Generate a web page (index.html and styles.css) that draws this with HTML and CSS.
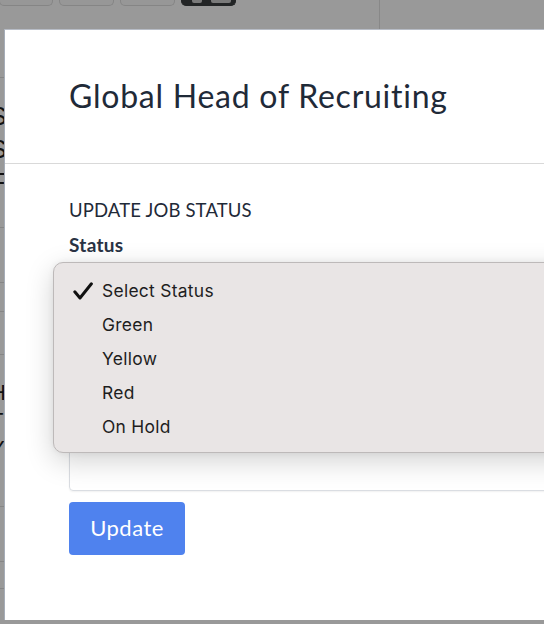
FILE: index.html
```html
<!DOCTYPE html>
<html>
<head>
<meta charset="utf-8">
<link rel="stylesheet" href="styles.css">
</head>
<body>
<div class="page">
  <div class="toolbar">
    <span class="tb-btn"></span>
    <span class="tb-btn"></span>
    <span class="tb-btn"></span>
    <span class="tb-btn dark"><i></i><i></i></span>
    <span class="tb-divider"></span>
  </div>
  <div class="list">
    <div class="row ra"></div>
    <div class="row rb"><span>S</span><span>S</span><span>F</span></div>
    <div class="row rc"></div>
    <div class="row rd"></div>
    <div class="row re"></div>
    <div class="row rf"><span>H</span><span>T</span><span>Y</span></div>
    <div class="row rg"></div>
    <div class="row rh"></div>
  </div>
</div>

<div class="modal">
  <div class="modal-header">
    <h1 class="modal-title">Global Head of Recruiting</h1>
  </div>
  <div class="modal-body">
    <h2 class="section-title">UPDATE JOB STATUS</h2>
    <label class="field-label">Status</label>
    <div class="select-box"></div>
    <div class="textarea-box"></div>
    <button class="btn-primary">Update</button>

    <ul class="select-popup">
      <li class="option selected">
        <svg class="check" viewBox="0 0 20 18" width="20" height="18"><path d="M1.8 9.8 L7 16 L18.4 1.8" fill="none" stroke="#111" stroke-width="3" stroke-linecap="round" stroke-linejoin="round"/></svg>
        <span>Select Status</span>
      </li>
      <li class="option"><span>Green</span></li>
      <li class="option"><span>Yellow</span></li>
      <li class="option"><span>Red</span></li>
      <li class="option"><span>On Hold</span></li>
    </ul>
  </div>
</div>
</body>
</html>
```

FILE: styles.css
```css
* { box-sizing: border-box; }
html, body {
  margin: 0;
  padding: 0;
  width: 544px;
  height: 624px;
  overflow: hidden;
  background: #999999;
  font-family: "Lato", "Open Sans", sans-serif;
}
.page {
  width: 544px;
  height: 624px;
}
.toolbar {
  position: relative;
  height: 29px;
  display: flex;
  gap: 6px;
  align-items: flex-start;
}
.tb-btn {
  display: block;
  width: 55px;
  height: 7px;
  margin-top: -1px;
  border: 1px solid #858585;
  border-top: none;
  border-radius: 0 0 5px 5px;
  background: #979797;
}
.tb-btn:first-child { width: 54px; margin-left: -1px; }
.tb-btn.dark {
  background: #232526;
  border-color: #232526;
  display: flex;
  gap: 9px;
  padding-left: 10px;
}
.tb-btn.dark i {
  display: block;
  width: 10px;
  height: 4px;
  background: #7a7a7a;
  border-radius: 0 0 2px 2px;
}
.tb-btn.dark i + i { width: 20px; }
.tb-divider {
  position: absolute;
  left: 379px;
  top: 0;
  width: 1px;
  height: 29px;
  background: #888;
}
.list {
  width: 5px;
  overflow: hidden;
  display: flex;
  flex-direction: column;
}
.row {
  border-bottom: 1px solid #868686;
  color: #111;
  font-family: "Liberation Sans", sans-serif;
  display: flex;
  flex-direction: column;
}
.row span { display: block; text-indent: -10px; white-space: nowrap; }
.ra { height: 49px; }
.rb { height: 150px; font-size: 25px; line-height: 33px; padding-top: 22px; }
.rc { height: 55px; }
.rd { height: 29px; }
.re { height: 43px; }
.rf { height: 152px; font-size: 22px; line-height: 28px; padding-top: 24px; }
.rg { height: 55px; }
.rh { height: 27px; }

.modal {
  position: absolute;
  left: 4px;
  top: 29px;
  width: 600px;
  height: 591px;
  background: #ffffff;
  border-left: 1px solid #a6adb8;
  border-top: 1px solid #b7bcc6;
}
.modal-header {
  height: 134px;
  border-bottom: 1px solid #d9d9d9;
  display: flex;
  align-items: center;
  padding-left: 64px;
  padding-bottom: 2px;
}
.modal-title {
  margin: 0;
  font-weight: 400;
  font-size: 32px;
  color: #1f2a38;
  letter-spacing: 0.75px;
}
.modal-body {
  position: relative;
  padding: 35px 0 0 64px;
}
.section-title {
  margin: 0;
  font-weight: 400;
  font-size: 18.5px;
  color: #1f2a38;
  letter-spacing: 0.15px;
  line-height: 22px;
}
.field-label {
  display: block;
  margin-top: 13px;
  font-weight: 700;
  font-size: 19px;
  color: #2a3344;
  line-height: 22px;
  letter-spacing: 0.3px;
}
.select-box {
  margin-top: 6px;
  height: 38px;
  border: 1px solid #dadde2;
  border-radius: 4px;
}
.textarea-box {
  margin-top: 8px;
  height: 183px;
  border: 1px solid #dadde2;
  border-radius: 4px;
  box-shadow: 0 1px 2px rgba(0,0,0,0.06);
}
.btn-primary {
  display: block;
  margin-top: 11px;
  width: 116px;
  height: 53px;
  border: none;
  border-radius: 4px;
  background: #4f82ee;
  color: #ffffff;
  font-family: "Lato", "Open Sans", sans-serif;
  font-size: 22px;
  letter-spacing: 0.5px;
  padding: 0 0 2px 0;
}
.select-popup {
  position: absolute;
  left: 48px;
  top: 98px;
  width: 560px;
  height: 191px;
  margin: 0;
  padding: 10px 0 0 0;
  list-style: none;
  background: #e9e5e5;
  border: 1px solid #bdb9b9;
  border-radius: 10px;
  box-shadow: 0 8px 28px rgba(0,0,0,0.18), 0 0 6px rgba(0,0,0,0.06);
}
.option {
  position: relative;
  height: 34px;
  display: flex;
  align-items: center;
  padding-left: 48px;
  font-family: "Inter", "Noto Sans", sans-serif;
  font-size: 17.4px;
  color: #1e1e1e;
  letter-spacing: 0.3px;
}
.check {
  position: absolute;
  left: 19px;
  top: 9px;
}
```
